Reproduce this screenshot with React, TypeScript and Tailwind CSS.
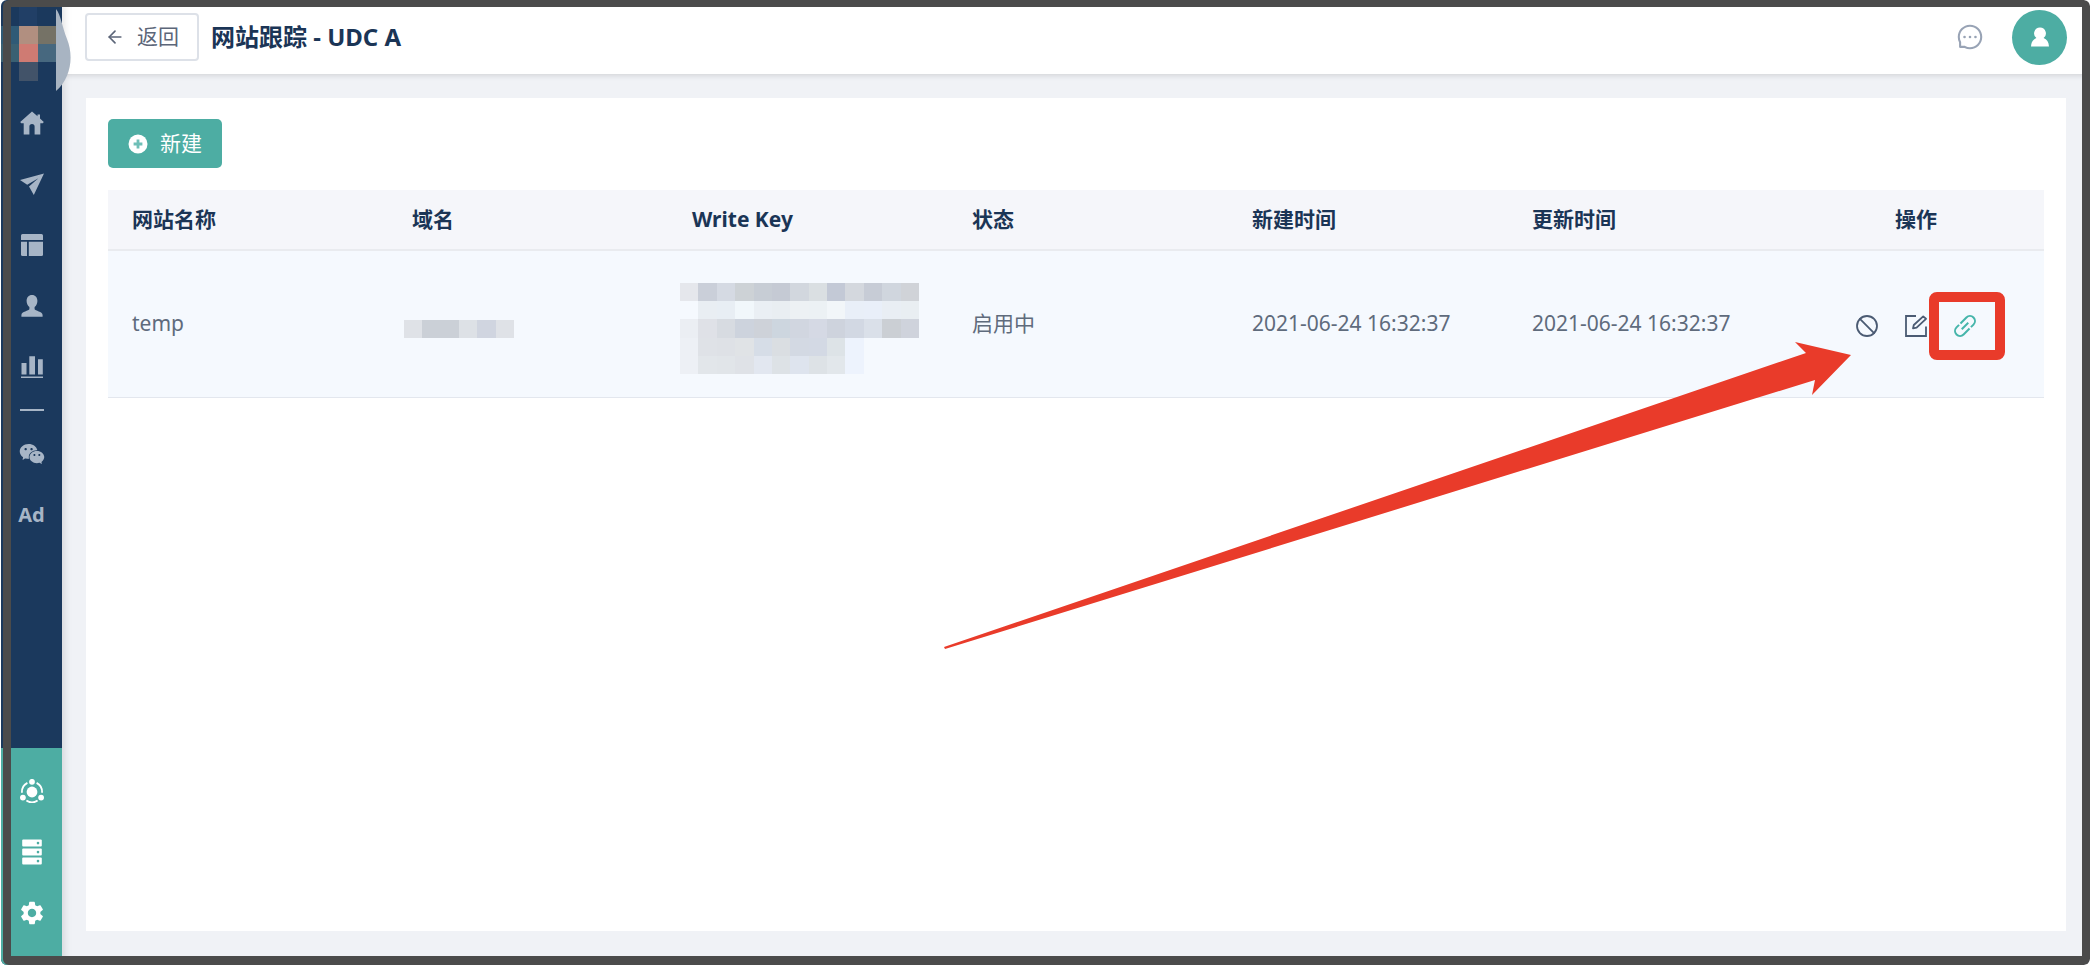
import React from "react";
import { AiFillWechat, AiOutlineMessage } from "react-icons/ai";
import { MdSettings } from "react-icons/md";
import { ArrowLeft, Ban } from "lucide-react";

interface ISite {
  name: string;
  status: string;
  createdAt: string;
  updatedAt: string;
}

const sites: ISite[] = [
  {
    name: "temp",
    status: "启用中",
    createdAt: "2021-06-24 16:32:37",
    updatedAt: "2021-06-24 16:32:37",
  },
];

const columns = ["网站名称", "域名", "Write Key", "状态", "新建时间", "更新时间"];

const domainMask = [["#dfe2e7", "#cbd0d7", "#cbd0d7", "#dde1e6", "#d0d5e0", "#dfe2e7"]];

const keyMask = [
  ["#e5e7ec", "#cacfd9", "#d5dae3", "#cdd2d6", "#c7cdd5", "#c5cad4", "#d2d7de", "#dadfe2", "#c3c9d6", "#d4d8de", "#c7ccd6", "#d0d6de", "#d0d3d8"],
  ["#f5f9fe", "#e9eef3", "#e8eef4", "#f1f7fb", "#eaeff4", "#e9eef2", "#edf1f4", "#ecf1f4", "#f2f6f9", "#e9eff8", "#e9eff9", "#e9eef4", "#e9eef2"],
  ["#ebeef3", "#dfe1e7", "#d7dbe1", "#cdd3dd", "#ced2d9", "#cdd6df", "#d1d6e0", "#d5d9e4", "#ced3dd", "#d2d8e3", "#dae0e9", "#cbcfd4", "#cfd3dc"],
  ["#edf0f5", "#dfe2e7", "#dee1e6", "#e0e3e6", "#d6dde7", "#dadee2", "#d3d9e3", "#d3d9e4", "#dde3e7", "#edf3fd"],
  ["#edf0f5", "#e2e6ea", "#e1e5e9", "#dfe2e7", "#e2e7f0", "#dde2e6", "#dee4ee", "#dde2e6", "#e2e7eb", "#edf3fd"],
];

function Mosaic({ rows, label }: { rows: string[][]; label: string }) {
  const cols = rows[0].length;
  return (
    <svg
      role="img"
      aria-label={label}
      viewBox={`0 0 ${cols} ${rows.length}`}
      width={Math.round(cols * 18.4)}
      height={Math.round(rows.length * 18.2)}
      preserveAspectRatio="none"
      shapeRendering="crispEdges"
      className="block"
    >
      {rows.map((row, y) =>
        row.map((color, x) => (
          <rect key={`${x}-${y}`} x={x} y={y} width="1" height="1" fill={color} />
        ))
      )}
    </svg>
  );
}

function HomeIcon() {
  return (
    <svg viewBox="0 0 24 24" className="size-6" fill="currentColor">
      <path d="M12 .5 L17.5 5.2 V3.6 H20 V7.4 L23.8 11 L22.8 12.3 H20.3 V23.5 H14.6 V15.5 A2.6 2.6 0 0 0 9.4 15.5 V23.5 H3.7 V12.3 H1.2 L.2 11 Z" />
    </svg>
  );
}

function SendIcon() {
  return (
    <svg viewBox="0 0 24 24" className="size-6" fill="currentColor">
      <path d="M24 1.5 L0 8 L7.2 12.8 L18.4 6.2 L9 14.4 L13.8 23 Z" />
    </svg>
  );
}

function LayoutIcon() {
  return (
    <svg viewBox="0 0 24 24" className="size-6" fill="currentColor">
      <path d="M2.5 1 H21.5 A1.5 1.5 0 0 1 23 2.5 V7 H1 V2.5 A1.5 1.5 0 0 1 2.5 1 Z" />
      <path d="M1 8.8 H7 V23 H2.5 A1.5 1.5 0 0 1 1 21.5 Z" />
      <path d="M8.8 8.8 H23 V21.5 A1.5 1.5 0 0 1 21.5 23 H8.8 Z" />
    </svg>
  );
}

function UserIcon() {
  return (
    <svg viewBox="0 0 24 24" className="size-6" fill="currentColor">
      <path d="M12 1 C15.4 1 17.4 3.6 17.4 7 C17.4 9.6 16.2 11.8 14.6 13 V15.2 C15 16.8 22.6 17.4 22.6 21 V22.8 H1.4 V21 C1.4 17.4 9 16.8 9.4 15.2 V13 C7.8 11.8 6.6 9.6 6.6 7 C6.6 3.6 8.6 1 12 1 Z" />
    </svg>
  );
}

function ChartIcon() {
  return (
    <svg viewBox="0 0 24 24" className="size-6" fill="currentColor">
      <path d="M1.5 8 H6.5 V19.5 H1.5 Z M9.3 1.2 H15 V19.5 H9.3 Z M18 4.2 H22.8 V19.5 H18 Z M1 21.4 H23 V23 H1 Z" />
    </svg>
  );
}

function NodesIcon() {
  return (
    <svg viewBox="0 0 24 24" className="size-6" fill="currentColor">
      <circle cx="12" cy="13" r="5.4" />
      <circle cx="12" cy="2.8" r="2.9" />
      <circle cx="2.9" cy="18.6" r="2.9" />
      <circle cx="21.1" cy="18.6" r="2.9" />
      <g fill="none" stroke="currentColor" strokeWidth="1.8">
        <path d="M7.4 3.9 A10.2 10.2 0 0 0 1.9 13.8" />
        <path d="M16.6 3.9 A10.2 10.2 0 0 1 22.1 13.8" />
        <path d="M6.4 21.6 A10.2 10.2 0 0 0 17.6 21.6" />
      </g>
    </svg>
  );
}

function ServerIcon() {
  return (
    <svg viewBox="0 0 24 24" className="size-6 overflow-visible" fill="currentColor">
      {[0, 9, 18].map((y) => (
        <g key={y}>
          <rect x="2.2" y={y - 0.4} width="19.6" height="7" rx="1" />
          <circle cx="18" cy={y + 3.1} r="1.3" className="text-[#4dada3]" />
        </g>
      ))}
    </svg>
  );
}

function AvatarIcon() {
  return (
    <svg viewBox="0 0 20 20" className="size-5" fill="currentColor">
      <path d="M10 .6 A5.8 5.8 0 0 1 13.6 11 C16.8 12.4 18.8 15 19 19.5 H1 C1.2 15 3.2 12.4 6.4 11 A5.8 5.8 0 0 1 10 .6 Z" />
    </svg>
  );
}

function PlusIcon() {
  return (
    <svg viewBox="0 0 20 20" className="size-5">
      <circle cx="10" cy="10" r="9.5" fill="white" />
      <path d="M10 5.6 V14.4 M5.6 10 H14.4" stroke="#6fbfb7" strokeWidth="2.8" />
    </svg>
  );
}

function EditIcon() {
  return (
    <svg viewBox="0 0 24 24" className="size-6" fill="none" stroke="currentColor" strokeWidth="1.8">
      <path d="M12 2 H2 V22 H22 V12.5" />
      <path d="M9 14.4 L9.8 11 L19.2 2.4 L22 4.8 L12.6 13.6 Z" strokeLinejoin="round" />
    </svg>
  );
}

function LinkIcon() {
  return (
    <svg viewBox="0 0 24 24" className="size-6" fill="none" stroke="currentColor" strokeWidth="2">
      <g transform="rotate(-45 12 12)">
        <path d="M10.6 7 H19 A5 5 0 0 1 19 17 H15.4" />
        <path d="M13.4 17 H5 A5 5 0 0 1 5 7 H8.6" />
        <path d="M7.4 12 H16.6" />
      </g>
    </svg>
  );
}

const mainMenu = [
  { label: "首页", icon: <HomeIcon /> },
  { label: "营销", icon: <SendIcon /> },
  { label: "页面", icon: <LayoutIcon /> },
  { label: "客户", icon: <UserIcon /> },
  { label: "报表", icon: <ChartIcon /> },
];

const channelMenu = [
  { label: "微信", icon: <AiFillWechat className="size-7" /> },
  { label: "广告", icon: <span className="text-xl font-bold">Ad</span> },
];

const systemMenu = [
  { label: "数据源", icon: <NodesIcon /> },
  { label: "数据中心", icon: <ServerIcon /> },
  { label: "设置", icon: <MdSettings className="size-7" /> },
];

function MenuItem({ label, icon }: { label: string; icon: React.ReactNode }) {
  return (
    <a href="#" aria-label={label} className="flex h-[61px] items-center justify-center">
      {icon}
    </a>
  );
}

function Sidebar() {
  return (
    <nav className="relative z-10 flex w-[61px] shrink-0 flex-col bg-[#1b395d] text-[#a7b5c6] shadow-[2px_0_8px_rgba(0,0,0,0.12)]">
      <div className="h-[92px]">
        <svg viewBox="0 0 72 92" className="h-[92px] w-[72px]">
          <g shapeRendering="crispEdges">
            <path d="M18 7 h18 v19 h-18 Z" fill="#213f66" />
            <path d="M0 26 h18 v18 h-18 Z" fill="#2f5a76" />
            <path d="M0 44 h18 v18 h-18 Z" fill="#3a6072" />
            <path d="M18 26 h19 v18 h-19 Z" fill="#b18f80" />
            <path d="M37 26 h18 v18 h-18 Z" fill="#757266" />
            <path d="M18 44 h19 v18 h-19 Z" fill="#cf7b73" />
            <path d="M37 44 h18 v18 h-18 Z" fill="#47687f" />
            <path d="M18 62 h19 v19 h-19 Z" fill="#425369" />
          </g>
          <path d="M55 9 C60 15 61 27 66 39 C73 56 70 78 55 91 Z" fill="#a8b4c2" />
        </svg>
      </div>
      {mainMenu.map((item) => (
        <MenuItem key={item.label} {...item} />
      ))}
      <div className="flex h-[26px] items-center justify-center">
        <hr className="w-6 border-t-2 border-[#a7b5c6]" />
      </div>
      {channelMenu.map((item) => (
        <MenuItem key={item.label} {...item} />
      ))}
      <div className="mt-auto bg-[#4dada3] pt-3 pb-[22px] text-white">
        {systemMenu.map((item) => (
          <MenuItem key={item.label} {...item} />
        ))}
      </div>
    </nav>
  );
}

function Header() {
  return (
    <header className="flex h-[74px] items-center bg-white px-[23px] shadow-[0_1px_6px_rgba(0,0,0,0.15)]">
      <button className="flex h-12 items-center gap-3 rounded border-2 border-[#dde1e8] px-[18px] text-[21px] text-[#5c6679]">
        <ArrowLeft className="size-5" strokeWidth={2} />
        返回
      </button>
      <h1 className="ml-3 text-2xl font-bold text-[#1b3556]">网站跟踪 - UDC A</h1>
      <div className="ml-auto flex items-center gap-7">
        <button aria-label="消息" className="text-[#98a3b5]">
          <AiOutlineMessage className="size-7" />
        </button>
        <button
          aria-label="账户"
          className="flex size-[55px] items-center justify-center rounded-full bg-[#4dada3] text-white"
        >
          <AvatarIcon />
        </button>
      </div>
    </header>
  );
}

function SiteTable() {
  return (
    <table className="mt-[22px] w-full table-fixed text-left text-[21px]">
      <thead>
        <tr className="h-[60px] border-b-2 border-[#e9ebef] bg-[#f5f6fa] text-[#1b3556]">
          {columns.map((column) => (
            <th key={column} className="pl-6 font-bold">
              {column}
            </th>
          ))}
          <th className="w-64 text-center font-bold">操作</th>
        </tr>
      </thead>
      <tbody>
        {sites.map((site) => (
          <tr key={site.name} className="h-[147px] border-b border-[#e3e7ee] bg-[#f5f9fe] text-[#5f6b7c]">
            <td className="pl-6">{site.name}</td>
            <td className="pt-2.5 pl-4">
              <Mosaic rows={domainMask} label="域名" />
            </td>
            <td className="pt-2.5 pl-3">
              <Mosaic rows={keyMask} label="Write Key" />
            </td>
            <td className="pl-6">{site.status}</td>
            <td className="pl-6">{site.createdAt}</td>
            <td className="pl-6">{site.updatedAt}</td>
            <td className="pt-1">
              <div className="flex items-center justify-center gap-[25px] text-[#4b5b73]">
                <button aria-label="禁用">
                  <Ban className="block size-6 overflow-visible" strokeWidth={1.8} />
                </button>
                <button aria-label="编辑">
                  <EditIcon />
                </button>
                <button aria-label="链接" className="relative text-[#45b5aa]">
                  <LinkIcon />
                  <span className="absolute -inset-y-[22px] -right-7 -left-6 rounded-lg border-[10px] border-[#e93b2a]" />
                </button>
              </div>
            </td>
          </tr>
        ))}
      </tbody>
    </table>
  );
}

// Arrow pointing at the row actions
function Arrow() {
  return (
    <svg
      viewBox="0 0 910 310"
      className="pointer-events-none absolute top-[242px] right-[215px] h-[310px] w-[910px]"
      fill="#e93b2a"
    >
      <path d="M3 307 L865 13 L854 2 L910 15 L871 55 L874 40 L4 309 Z" />
    </svg>
  );
}

export default function App() {
  return (
    <div className="h-screen bg-white pr-0.5 pb-[3px] pl-px font-['Noto_Sans','Noto_Sans_CJK_SC',sans-serif]">
      <div className="relative flex h-full overflow-hidden rounded-md">
        <Sidebar />
        <div className="flex min-w-0 flex-1 flex-col bg-[#f0f2f6]">
          <Header />
          <main className="relative mx-6 mt-6 mb-[34px] flex-1 bg-white px-[22px] pt-[21px]">
            <button className="flex h-[49px] items-center gap-3 rounded-[5px] bg-[#4dada3] px-5 text-[21px] text-white">
              <PlusIcon />
              新建
            </button>
            <SiteTable />
            <Arrow />
          </main>
        </div>
        <div className="pointer-events-none absolute inset-y-0 right-0 left-0.5 z-20 rounded-md border-x-8 border-t-7 border-b-9 border-[#4b4b4b]" />
      </div>
    </div>
  );
}
